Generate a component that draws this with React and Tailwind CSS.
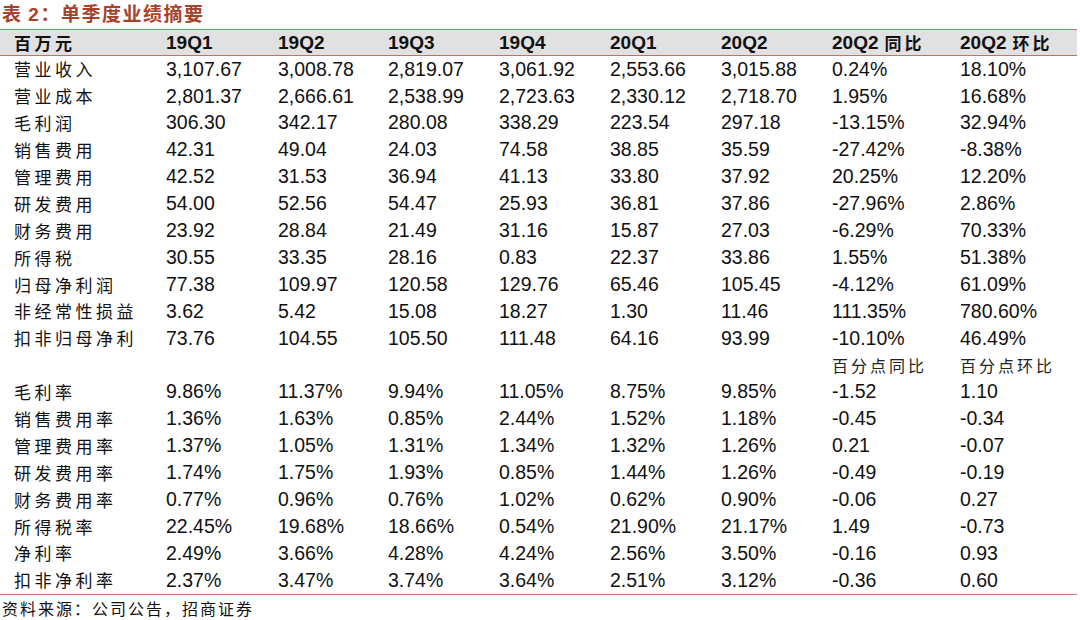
const heads = ["19Q1", "19Q2", "19Q3", "19Q4", "20Q1", "20Q2", "20Q2 同比", "20Q2 环比"];

const rows = [
  ["营业收入", "3,107.67", "3,008.78", "2,819.07", "3,061.92", "2,553.66", "3,015.88", "0.24%", "18.10%"],
  ["营业成本", "2,801.37", "2,666.61", "2,538.99", "2,723.63", "2,330.12", "2,718.70", "1.95%", "16.68%"],
  ["毛利润", "306.30", "342.17", "280.08", "338.29", "223.54", "297.18", "-13.15%", "32.94%"],
  ["销售费用", "42.31", "49.04", "24.03", "74.58", "38.85", "35.59", "-27.42%", "-8.38%"],
  ["管理费用", "42.52", "31.53", "36.94", "41.13", "33.80", "37.92", "20.25%", "12.20%"],
  ["研发费用", "54.00", "52.56", "54.47", "25.93", "36.81", "37.86", "-27.96%", "2.86%"],
  ["财务费用", "23.92", "28.84", "21.49", "31.16", "15.87", "27.03", "-6.29%", "70.33%"],
  ["所得税", "30.55", "33.35", "28.16", "0.83", "22.37", "33.86", "1.55%", "51.38%"],
  ["归母净利润", "77.38", "109.97", "120.58", "129.76", "65.46", "105.45", "-4.12%", "61.09%"],
  ["非经常性损益", "3.62", "5.42", "15.08", "18.27", "1.30", "11.46", "111.35%", "780.60%"],
  ["扣非归母净利", "73.76", "104.55", "105.50", "111.48", "64.16", "93.99", "-10.10%", "46.49%"],
  ["", "", "", "", "", "", "", "百分点同比", "百分点环比"],
  ["毛利率", "9.86%", "11.37%", "9.94%", "11.05%", "8.75%", "9.85%", "-1.52", "1.10"],
  ["销售费用率", "1.36%", "1.63%", "0.85%", "2.44%", "1.52%", "1.18%", "-0.45", "-0.34"],
  ["管理费用率", "1.37%", "1.05%", "1.31%", "1.34%", "1.32%", "1.26%", "0.21", "-0.07"],
  ["研发费用率", "1.74%", "1.75%", "1.93%", "0.85%", "1.44%", "1.26%", "-0.49", "-0.19"],
  ["财务费用率", "0.77%", "0.96%", "0.76%", "1.02%", "0.62%", "0.90%", "-0.06", "0.27"],
  ["所得税率", "22.45%", "19.68%", "18.66%", "0.54%", "21.90%", "21.17%", "1.49", "-0.73"],
  ["净利率", "2.49%", "3.66%", "4.28%", "4.24%", "2.56%", "3.50%", "-0.16", "0.93"],
  ["扣非净利率", "2.37%", "3.47%", "3.74%", "3.64%", "2.51%", "3.12%", "-0.36", "0.60"],
];

const grid = "grid grid-cols-[166px_112px_110px_111px_111px_111px_111px_128px_1fr] items-center";
const num = "font-['Liberation_Sans',Arial,sans-serif]";
const cjk = "font-['Noto_Sans_CJK_SC',sans-serif]";

function Cell({ text, first }) {
  const isCjk = /[\u4e00-\u9fff]/.test(text);
  if (first) {
    return <div className={`${cjk} pl-[14px] text-[17px] tracking-[3.5px] text-[#111] leading-none -mt-[1px]`}>{text}</div>;
  }
  if (isCjk) {
    return <div className={`${cjk} text-[16px] tracking-[3px] text-[#222] leading-none`}>{text}</div>;
  }
  return <div className={`${num} text-[19.5px] text-[#111] leading-none`}>{text}</div>;
}

export default function App() {
  return (
    <div className="w-[1080px] h-[620px] bg-white overflow-hidden">
      <div className={`h-[29px] pl-[2px] flex items-center text-[19px] font-bold tracking-[1.5px] text-[#a8412a] ${cjk}`}>
        <span>表 <span className={num}>2</span>：单季度业绩摘要</span>
      </div>
      <div className="w-[1077px]">
        <div className={`${grid} h-[27px] bg-[#e1e1e1] border-y border-[#c07266]`}>
          <div className={`${cjk} pl-[14px] text-[17px] font-bold tracking-[3.5px] text-[#111] leading-none`}>百万元</div>
          {heads.map((h) => {
            const [q, rest] = h.split(" ");
            return (
              <div key={h} className="font-bold text-[19px] text-[#111] leading-none flex items-center">
                <span className={num}>{q}</span>
                {rest && <span className={`${cjk} ml-[6px] text-[17px] tracking-[3px]`}>{rest}</span>}
              </div>
            );
          })}
        </div>
        <div className="border-b border-[#c07266]">
          {rows.map((r, i) => (
            <div key={i} className={`${grid} h-[26.9px]`}>
              {r.map((c, j) => (
                <Cell key={j} text={c} first={j === 0} />
              ))}
            </div>
          ))}
        </div>
      </div>
      <div className={`${cjk} pl-[2px] pt-[2px] text-[16px] tracking-[2px] text-[#111] leading-[22px]`}>
        资料来源：公司公告，招商证券
      </div>
    </div>
  );
}
